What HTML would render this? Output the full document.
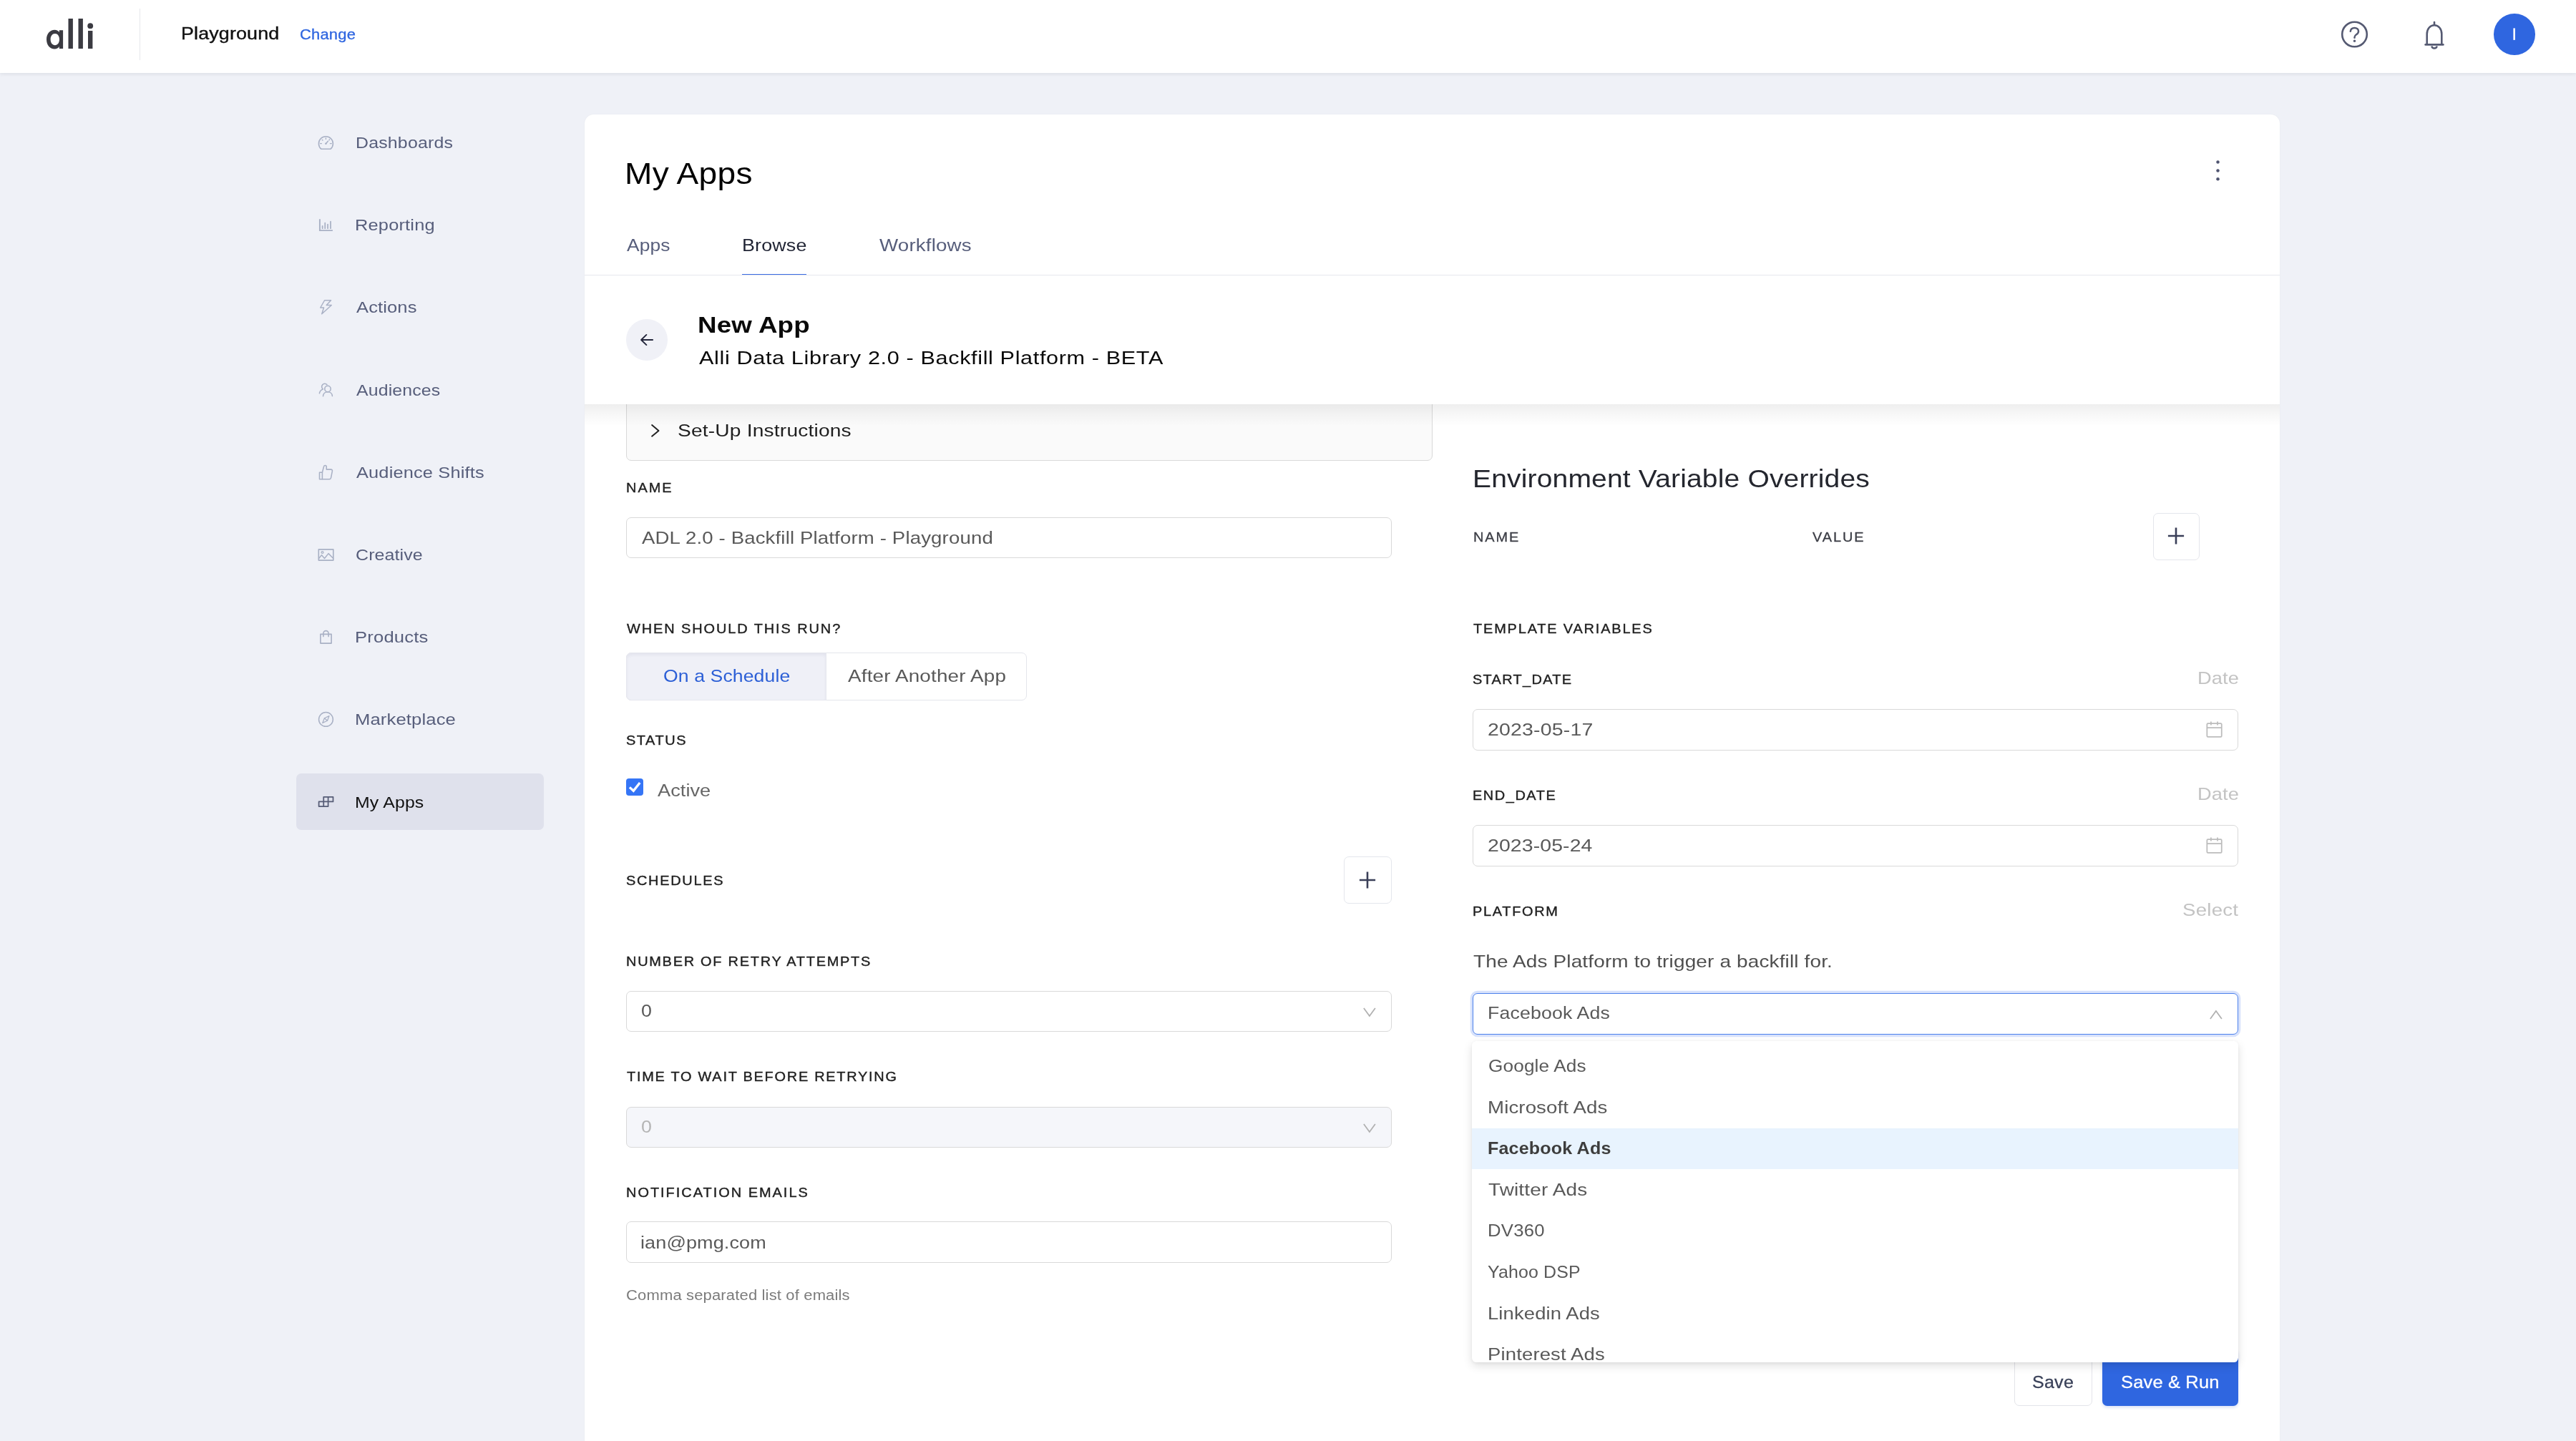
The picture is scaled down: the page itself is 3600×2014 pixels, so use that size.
<!DOCTYPE html>
<html lang="en"><head><meta charset="utf-8"><title>Alli - My Apps</title>
<style>
html,body{margin:0;padding:0;}
body{width:3600px;height:2014px;overflow:hidden;position:relative;background:#eff1f7;font-family:"Liberation Sans", sans-serif;}
#root{position:absolute;left:0;top:0;width:3600px;height:2014px;overflow:hidden;will-change:opacity;transform:translateZ(0);}
.b{position:absolute;display:block;}
.t{position:absolute;white-space:pre;font-family:"Liberation Sans", sans-serif;transform-origin:0 0;}
</style></head>
<body>
<div id="root">
<div class="b" style="left:0px;top:0px;width:3600px;height:102px;background:#fff;box-shadow:0 1.600px 4.500px rgba(20,22,35,0.075);"></div>
<svg class="b" style="left:60px;top:20px" width="80" height="56" viewBox="0 0 80 56" fill="none"><g fill="#3b3b42"><path fill-rule="evenodd" d="M16.4 21.7c3 0 5.2 1.3 6.4 3.2v-2.7h5.3V48h-5.3v-2.9c-1.2 2-3.5 3.4-6.5 3.4C9.7 48.5 5 43 5 35.1c0-7.900 4.700-13.4 11.400-13.400zM16.9 27c-3.700 0-6.300 3.200-6.300 8.100s2.600 8.100 6.300 8.100c3.600 0 6.100-3.200 6.100-8.100S20.500 27 16.900 27z"/><rect x="35.5" y="6" width="6.4" height="42"/><rect x="49.500" y="6" width="6.4" height="42"/><rect x="63" y="23" width="6.4" height="25"/><circle cx="66.2" cy="16.2" r="3.900"/></g></svg>
<div class="b" style="left:195px;top:12px;width:1px;height:72px;background:#e6e7ec;"></div>
<div class="t" style="left:253.02px;top:33px;line-height:27px;font-size:24.4px;color:#111;letter-spacing:0.13px;-webkit-text-stroke:0.4px #111;transform:scaleX(1.101);">Playground</div>
<div class="t" style="left:419.0px;top:36px;line-height:23px;font-size:20.6px;color:#2f66e0;letter-spacing:0.17px;-webkit-text-stroke:0.3px #2f66e0;transform:scaleX(1.067);">Change</div>
<svg class="b" style="left:3270px;top:28px" width="40" height="40" viewBox="0 0 40 40" fill="none"><circle cx="20.500" cy="20" r="17.300" stroke="#555a72" stroke-width="2.600"/><path d="M14.800 15.800c.300-3 2.600-4.900 5.700-4.900 3.200 0 5.500 2 5.500 4.800 0 2.300-1.300 3.500-3 4.600-1.700 1.100-2.500 2-2.500 3.800v.7" stroke="#555a72" stroke-width="2.500" stroke-linecap="round" fill="none"/><circle cx="20.500" cy="29.300" r="1.700" fill="#555a72"/></svg>
<svg class="b" style="left:3384px;top:28px" width="36" height="44" viewBox="0 0 36 44" fill="none"><path d="M18 3v3.500" stroke="#555a72" stroke-width="2.600" stroke-linecap="round"/><path d="M7.700 34.300V19.500C7.700 12.500 12 7.300 18 7.300s10.300 5.200 10.300 12.200v14.800" stroke="#555a72" stroke-width="2.600" fill="none"/><path d="M5.700 34.400h24.600" stroke="#555a72" stroke-width="2.800" stroke-linecap="round"/><path d="M14.300 36.500c.400 1.900 1.800 3.100 3.700 3.100s3.300-1.200 3.700-3.100" stroke="#555a72" stroke-width="2.500" fill="none"/></svg>
<div class="b" style="left:3485px;top:19px;width:57.5px;height:57.5px;background:#2f66e0;border-radius:50%;"></div>
<svg class="b" style="left:3505px;top:36px" width="18" height="24" viewBox="0 0 18 24" fill="none"><rect x="7.400" y="3.400" width="2.500" height="16.500" fill="#fff"/></svg>
<div class="b" style="left:414px;top:1081px;width:346px;height:79px;background:#dfe1ec;border-radius:7px;"></div>
<div class="t" style="left:497.0px;top:186px;line-height:26px;font-size:22.9px;color:#575e7b;letter-spacing:0.18px;transform:scaleX(1.087);">Dashboards</div>
<div class="t" style="left:496.0px;top:301px;line-height:26px;font-size:22.9px;color:#575e7b;letter-spacing:0.18px;transform:scaleX(1.108);">Reporting</div>
<div class="t" style="left:497.5px;top:416px;line-height:26px;font-size:22.9px;color:#575e7b;letter-spacing:0.11px;transform:scaleX(1.115);">Actions</div>
<div class="t" style="left:497.5px;top:532px;line-height:26px;font-size:22.9px;color:#575e7b;letter-spacing:0.14px;transform:scaleX(1.085);">Audiences</div>
<div class="t" style="left:497.5px;top:647px;line-height:26px;font-size:22.9px;color:#575e7b;letter-spacing:0.15px;transform:scaleX(1.108);">Audience Shifts</div>
<div class="t" style="left:496.5px;top:762px;line-height:26px;font-size:22.9px;color:#575e7b;letter-spacing:0.1px;transform:scaleX(1.091);">Creative</div>
<div class="t" style="left:496.0px;top:877px;line-height:26px;font-size:22.9px;color:#575e7b;letter-spacing:0.19px;transform:scaleX(1.117);">Products</div>
<div class="t" style="left:496.0px;top:992px;line-height:26px;font-size:22.9px;color:#575e7b;letter-spacing:0.11px;transform:scaleX(1.12);">Marketplace</div>
<div class="t" style="left:496.0px;top:1108px;line-height:26px;font-size:22.9px;color:#111;letter-spacing:0.16px;transform:scaleX(1.085);">My Apps</div>
<svg class="b" style="left:444px;top:189px" width="24" height="22" viewBox="0 0 24 22" fill="none"><path d="M4.700 19.200A10 10 0 1 1 18.100 19.200Z" stroke="#a9b1c5" stroke-width="1.55" fill="none" stroke-linecap="round" stroke-linejoin="round"/><path d="M11.400 3.900v1.500M3.500 11.600h1.900M17.400 11.600h1.900M6.300 6.400l.700.700M16 6.700l.600-.700" stroke="#a9b1c5" stroke-width="1.4" fill="none" stroke-linecap="round" stroke-linejoin="round"/><path d="M11.500 11.700 14.400 8.300" stroke="#a9b1c5" stroke-width="1.5" fill="none" stroke-linecap="round" stroke-linejoin="round"/><circle cx="11.400" cy="11.800" r="1.250" fill="#a9b1c5"/></svg>
<svg class="b" style="left:444px;top:304px" width="24" height="22" viewBox="0 0 24 22" fill="none"><path d="M2.900 2.200V18.100H20.900" stroke="#a9b1c5" stroke-width="1.900" fill="none" stroke-linejoin="miter"/><path d="M6.650 11.800v3.400M10.250 7.600v7.600M14.050 9.500v5.700M18 5.600v9.600" stroke="#a9b1c5" stroke-width="1.750" stroke-linecap="round"/></svg>
<svg class="b" style="left:444px;top:417px" width="24" height="24" viewBox="0 0 24 24" fill="none"><path d="M9.600 2.750H18.500L12.250 9.500H19.250L5.750 21.750L8.500 13H3.750Z" stroke="#a9b1c5" stroke-width="1.5" fill="none" stroke-linecap="round" stroke-linejoin="round" /></svg>
<svg class="b" style="left:444px;top:533px" width="24" height="24" viewBox="0 0 24 24" fill="none"><circle cx="14" cy="10.500" r="4.200" stroke="#a9b1c5" stroke-width="1.55" fill="none" stroke-linecap="round" stroke-linejoin="round"/><path d="M7.500 20.700C7.700 17.200 10.500 14.800 14 14.800S20.300 17.200 20.400 20.600" stroke="#a9b1c5" stroke-width="1.55" fill="none" stroke-linecap="round" stroke-linejoin="round"/><path d="M12.900 4.600A4.200 4.200 0 1 0 7.400 10.900C4.600 12 2.900 14 2.400 16.750" stroke="#a9b1c5" stroke-width="1.55" fill="none" stroke-linecap="round" stroke-linejoin="round"/></svg>
<svg class="b" style="left:444px;top:648px" width="24" height="24" viewBox="0 0 24 24" fill="none"><path d="M2.500 12.250H6.400V21.750H2.500Z" stroke="#a9b1c5" stroke-width="1.55" fill="none" stroke-linecap="round" stroke-linejoin="round"/><path d="M6.400 12.250L8.500 4.200C8.800 2.900 9.600 2.500 10.400 2.500C11.600 2.500 12.250 3.300 12.250 4.400V8.100H18.600C19.900 8.100 20.600 9.100 20.400 10.300L18.600 19.600C18.300 21 17.400 21.750 16.300 21.750H6.400" stroke="#a9b1c5" stroke-width="1.55" fill="none" stroke-linecap="round" stroke-linejoin="round"/></svg>
<svg class="b" style="left:443px;top:765px" width="26" height="22" viewBox="0 0 26 22" fill="none"><rect x="2.300" y="2.900" width="20.500" height="15.200" stroke="#a9b1c5" stroke-width="1.65" fill="none" stroke-linecap="round" stroke-linejoin="round" stroke-linejoin="miter"/><circle cx="7.500" cy="7" r="1.450" stroke="#a9b1c5" stroke-width="1.3" fill="none" stroke-linecap="round" stroke-linejoin="round"/><path d="M2.600 15.400 6.500 10.750 10.500 15.500 16 8.600 22.600 15.200" stroke="#a9b1c5" stroke-width="1.5" fill="none" stroke-linecap="round" stroke-linejoin="round"/></svg>
<svg class="b" style="left:444px;top:878px" width="24" height="24" viewBox="0 0 24 24" fill="none"><rect x="3.900" y="8.400" width="15.200" height="12.700" stroke="#a9b1c5" stroke-width="1.65" fill="none" stroke-linecap="round" stroke-linejoin="round" stroke-linejoin="miter"/><path d="M7.900 11.600V7.200A3.600 3.600 0 0 1 15.100 7.200V11.600" stroke="#a9b1c5" stroke-width="1.6" fill="none" stroke-linecap="round" stroke-linejoin="round"/></svg>
<svg class="b" style="left:444px;top:994px" width="24" height="24" viewBox="0 0 24 24" fill="none"><circle cx="11.450" cy="11.450" r="9.900" stroke="#a9b1c5" stroke-width="1.5" fill="none" stroke-linecap="round" stroke-linejoin="round"/><path d="M16 6.600 13.500 13.250 6.750 16.400 9.400 9.750ZM9.400 9.750 13.500 13.250" stroke="#a9b1c5" stroke-width="1.3" fill="none" stroke-linecap="round" stroke-linejoin="round"/></svg>
<svg class="b" style="left:444px;top:1111px" width="24" height="20" viewBox="0 0 24 20" fill="none"><path d="M8.250 2.750H21.500V9.400H8.250ZM14.600 2.750V16M1.600 9.400H14.600V16H1.600ZM8.250 9.400V16" stroke="#565c76" stroke-width="1.750" fill="none" stroke-linejoin="round"/></svg>
<div class="b" style="left:817px;top:160px;width:2369px;height:1900px;background:#fff;border-radius:12.800px 12.800px 0 0;box-shadow:0 0 2px rgba(30,35,60,0.05);"></div>
<div class="t" style="left:873.23px;top:219px;line-height:47px;font-size:41.8px;color:#000;letter-spacing:0.26px;transform:scaleX(1.103);">My Apps</div>
<svg class="b" style="left:3090px;top:220px" width="20" height="40" viewBox="0 0 20 40" fill="none"><circle cx="9.500" cy="6.6" r="2.250" fill="#4f5470"/><circle cx="9.500" cy="18.4" r="2.250" fill="#4f5470"/><circle cx="9.500" cy="30.3" r="2.250" fill="#4f5470"/></svg>
<div class="t" style="left:875.5px;top:329px;line-height:27px;font-size:24.6px;color:#575e7b;letter-spacing:0.11px;transform:scaleX(1.072);">Apps</div>
<div class="t" style="left:1036.75px;top:329px;line-height:27px;font-size:24.6px;color:#1f2333;letter-spacing:0.15px;transform:scaleX(1.092);">Browse</div>
<div class="t" style="left:1228.75px;top:329px;line-height:27px;font-size:24.6px;color:#575e7b;letter-spacing:0.14px;transform:scaleX(1.127);">Workflows</div>
<div class="b" style="left:817px;top:384px;width:2369px;height:1px;background:#e6e8ee;"></div>
<div class="b" style="left:1037px;top:383px;width:90px;height:1px;background:#3a6ce2;"></div>
<div class="b" style="left:875px;top:540px;width:1127px;height:104px;background:#fafafa;border:1px solid #d9d9d9;box-sizing:border-box;border-radius:7px;"></div>
<svg class="b" style="left:906px;top:590px" width="20" height="24" viewBox="0 0 20 24" fill="none"><path d="M5.100 4.100 14.500 11.900 5.100 19.700" stroke="#222" stroke-width="2" fill="none" stroke-linecap="round" stroke-linejoin="round"/></svg>
<div class="t" style="left:947.42px;top:588px;line-height:27px;font-size:24.4px;color:#1f1f1f;letter-spacing:0.16px;transform:scaleX(1.154);">Set-Up Instructions</div>
<div class="t" style="left:875.3px;top:671px;line-height:21px;font-size:19.2px;color:#1f1f1f;letter-spacing:1.92px;-webkit-text-stroke:0.4px #1f1f1f;transform:scaleX(1.04);">NAME</div>
<div class="b" style="left:875px;top:723px;width:1070px;height:57px;background:#fff;border:1px solid #d9d9d9;box-sizing:border-box;border-radius:7px;"></div>
<div class="t" style="left:896.6px;top:738px;line-height:27px;font-size:24.4px;color:#595959;letter-spacing:0.13px;transform:scaleX(1.131);">ADL 2.0 - Backfill Platform - Playground</div>
<div class="t" style="left:875.84px;top:868px;line-height:21px;font-size:19.2px;color:#1f1f1f;letter-spacing:1.83px;-webkit-text-stroke:0.4px #1f1f1f;transform:scaleX(1.04);">WHEN SHOULD THIS RUN?</div>
<div class="b" style="left:875px;top:912px;width:560px;height:66.5px;background:#fff;border:1px solid #e4e6ec;box-sizing:border-box;border-radius:7px;"></div>
<div class="b" style="left:875px;top:912px;width:280px;height:66.5px;background:#eff0f7;border:1px solid #e6e7ee;box-sizing:border-box;border-radius:7px 0 0 7px;box-shadow:inset 0 3px 5px -1px rgba(40,45,90,0.07);"></div>
<div class="t" style="left:926.5px;top:931px;line-height:27px;font-size:24.4px;color:#2c5fd6;letter-spacing:0.1px;transform:scaleX(1.09);">On a Schedule</div>
<div class="t" style="left:1184.7px;top:931px;line-height:27px;font-size:24.4px;color:#595959;letter-spacing:0.14px;transform:scaleX(1.142);">After Another App</div>
<div class="t" style="left:874.65px;top:1024px;line-height:21px;font-size:19.2px;color:#1f1f1f;letter-spacing:1.48px;-webkit-text-stroke:0.4px #1f1f1f;transform:scaleX(1.04);">STATUS</div>
<div class="b" style="left:875px;top:1088px;width:23.5px;height:23.5px;background:#3575f6;border-radius:4px;"></div>
<svg class="b" style="left:875px;top:1088px" width="23.5" height="23.5" viewBox="0 0 23.5 23.5" fill="none"><path d="M4.900 12.400 10.300 17.300 19.200 5.900" stroke="#fff" stroke-width="3.300" fill="none" stroke-linecap="butt" stroke-linejoin="miter"/></svg>
<div class="t" style="left:919.1px;top:1091px;line-height:27px;font-size:24.4px;color:#666;letter-spacing:0.05px;transform:scaleX(1.113);">Active</div>
<div class="t" style="left:874.65px;top:1220px;line-height:21px;font-size:19.2px;color:#1f1f1f;letter-spacing:1.63px;-webkit-text-stroke:0.4px #1f1f1f;transform:scaleX(1.04);">SCHEDULES</div>
<div class="b" style="left:1878px;top:1197px;width:67px;height:65.5px;background:#fff;border:1px solid #e4e6ec;box-sizing:border-box;border-radius:7px;"></div>
<svg class="b" style="left:1899.4px;top:1217.7px" width="24" height="24" viewBox="0 0 24 24" fill="none"><path d="M12 0.500v23M0.900 12h22.200" stroke="#3a3f58" stroke-width="2.600" stroke-linecap="butt"/></svg>
<div class="t" style="left:874.8px;top:1333px;line-height:21px;font-size:19.2px;color:#1f1f1f;letter-spacing:1.66px;-webkit-text-stroke:0.4px #1f1f1f;transform:scaleX(1.04);">NUMBER OF RETRY ATTEMPTS</div>
<div class="b" style="left:875px;top:1385px;width:1070px;height:56.5px;background:#fff;border:1px solid #d9d9d9;box-sizing:border-box;border-radius:7px;"></div>
<div class="t" style="left:895.6px;top:1399px;line-height:27px;font-size:24.4px;color:#595959;transform:scaleX(1.1);">0</div>
<svg class="b" style="left:1903.5px;top:1408px" width="20" height="14" viewBox="0 0 20 14" fill="none"><path d="M1.900 1.100 9.900 12 17.900 1.100" stroke="#b0b0b0" stroke-width="1.750" fill="none" stroke-linecap="butt" stroke-linejoin="miter"/></svg>
<div class="t" style="left:875.5px;top:1494px;line-height:21px;font-size:19.2px;color:#1f1f1f;letter-spacing:1.66px;-webkit-text-stroke:0.4px #1f1f1f;transform:scaleX(1.04);">TIME TO WAIT BEFORE RETRYING</div>
<div class="b" style="left:875px;top:1547px;width:1070px;height:56.5px;background:#f5f6fa;border:1px solid #d9d9d9;box-sizing:border-box;border-radius:7px;"></div>
<div class="t" style="left:895.6px;top:1561px;line-height:27px;font-size:24.4px;color:#b5b5b5;transform:scaleX(1.1);">0</div>
<svg class="b" style="left:1903.5px;top:1570px" width="20" height="14" viewBox="0 0 20 14" fill="none"><path d="M1.900 1.100 9.900 12 17.900 1.100" stroke="#b0b0b0" stroke-width="1.750" fill="none" stroke-linecap="butt" stroke-linejoin="miter"/></svg>
<div class="t" style="left:874.8px;top:1656px;line-height:21px;font-size:19.2px;color:#1f1f1f;letter-spacing:1.91px;-webkit-text-stroke:0.4px #1f1f1f;transform:scaleX(1.04);">NOTIFICATION EMAILS</div>
<div class="b" style="left:875px;top:1707px;width:1070px;height:57.5px;background:#fff;border:1px solid #d9d9d9;box-sizing:border-box;border-radius:7px;"></div>
<div class="t" style="left:894.8px;top:1723px;line-height:27px;font-size:24.4px;color:#595959;letter-spacing:0.11px;transform:scaleX(1.107);">ian@pmg.com</div>
<div class="t" style="left:874.8px;top:1799px;line-height:22px;font-size:20px;color:#7b7b7b;letter-spacing:0.14px;transform:scaleX(1.1);">Comma separated list of emails</div>
<div class="t" style="left:2058.2px;top:649px;line-height:39px;font-size:35.2px;color:#24262e;letter-spacing:0.13px;transform:scaleX(1.11);">Environment Variable Overrides</div>
<div class="t" style="left:2058.5px;top:740px;line-height:21px;font-size:19.2px;color:#3b3d45;letter-spacing:1.79px;-webkit-text-stroke:0.3px #3b3d45;transform:scaleX(1.04);">NAME</div>
<div class="t" style="left:2533.42px;top:740px;line-height:21px;font-size:19.2px;color:#3b3d45;letter-spacing:1.81px;-webkit-text-stroke:0.3px #3b3d45;transform:scaleX(1.04);">VALUE</div>
<div class="b" style="left:3008.5px;top:717px;width:65.5px;height:65.5px;background:#fff;border:1px solid #e4e6ec;box-sizing:border-box;border-radius:7px;"></div>
<svg class="b" style="left:3029px;top:737.4px" width="24" height="24" viewBox="0 0 24 24" fill="none"><path d="M12 0.500v23M0.900 12h22.200" stroke="#3a3f58" stroke-width="2.600" stroke-linecap="butt"/></svg>
<div class="t" style="left:2058.7px;top:868px;line-height:21px;font-size:19.2px;color:#1f1f1f;letter-spacing:1.75px;-webkit-text-stroke:0.4px #1f1f1f;transform:scaleX(1.04);">TEMPLATE VARIABLES</div>
<div class="t" style="left:2057.85px;top:939px;line-height:21px;font-size:19.2px;color:#1f1f1f;letter-spacing:1.25px;-webkit-text-stroke:0.4px #1f1f1f;transform:scaleX(1.04);">START_DATE</div>
<div class="t" style="left:3070.99px;top:934px;line-height:27px;font-size:24.4px;color:#c3c3c3;letter-spacing:0.11px;transform:scaleX(1.116);">Date</div>
<div class="b" style="left:2058px;top:991px;width:1070px;height:57.5px;background:#fff;border:1px solid #d9d9d9;box-sizing:border-box;border-radius:7px;"></div>
<div class="t" style="left:2079.3px;top:1006px;line-height:27px;font-size:24.4px;color:#595959;letter-spacing:0.17px;transform:scaleX(1.167);">2023-05-17</div>
<svg class="b" style="left:3083px;top:1008px" width="23" height="23" viewBox="0 0 23 23" fill="none"><rect x="1.350" y="3.150" width="20.400" height="18.700" rx="1.300" stroke="#bcbcbc" stroke-width="1.750"/><path d="M1.350 9.100h20.400M6.900 0.400v5.200M16 0.400v5.200" stroke="#bcbcbc" stroke-width="1.750" stroke-linecap="butt"/></svg>
<div class="t" style="left:2058.2px;top:1101px;line-height:21px;font-size:19.2px;color:#1f1f1f;letter-spacing:1.48px;-webkit-text-stroke:0.4px #1f1f1f;transform:scaleX(1.04);">END_DATE</div>
<div class="t" style="left:3070.99px;top:1096px;line-height:27px;font-size:24.4px;color:#c3c3c3;letter-spacing:0.11px;transform:scaleX(1.116);">Date</div>
<div class="b" style="left:2058px;top:1153px;width:1070px;height:57.5px;background:#fff;border:1px solid #d9d9d9;box-sizing:border-box;border-radius:7px;"></div>
<div class="t" style="left:2079.3px;top:1168px;line-height:27px;font-size:24.4px;color:#595959;letter-spacing:0.09px;transform:scaleX(1.166);">2023-05-24</div>
<svg class="b" style="left:3083px;top:1170px" width="23" height="23" viewBox="0 0 23 23" fill="none"><rect x="1.350" y="3.150" width="20.400" height="18.700" rx="1.300" stroke="#bcbcbc" stroke-width="1.750"/><path d="M1.350 9.100h20.400M6.900 0.400v5.200M16 0.400v5.200" stroke="#bcbcbc" stroke-width="1.750" stroke-linecap="butt"/></svg>
<div class="t" style="left:2058.2px;top:1263px;line-height:21px;font-size:19.2px;color:#1f1f1f;letter-spacing:1.62px;-webkit-text-stroke:0.4px #1f1f1f;transform:scaleX(1.04);">PLATFORM</div>
<div class="t" style="left:3050.14px;top:1258px;line-height:27px;font-size:24.4px;color:#c3c3c3;letter-spacing:0.23px;transform:scaleX(1.132);">Select</div>
<div class="t" style="left:2058.57px;top:1330px;line-height:27px;font-size:24.4px;color:#4f4f4f;letter-spacing:0.13px;transform:scaleX(1.146);">The Ads Platform to trigger a backfill for.</div>
<div class="b" style="left:2058px;top:1388px;width:1070px;height:58px;background:#fff;border:1.500px solid #4a80ec;box-sizing:border-box;border-radius:7px;box-shadow:0 0 0 3.300px rgba(60,110,235,0.2);"></div>
<div class="t" style="left:2078.6px;top:1402px;line-height:27px;font-size:24.4px;color:#595959;letter-spacing:0.15px;transform:scaleX(1.094);">Facebook Ads</div>
<svg class="b" style="left:3086.5px;top:1410.5px" width="20" height="14" viewBox="0 0 20 14" fill="none"><path d="M1.900 13 9.900 2.100 17.900 13" stroke="#b0b0b0" stroke-width="1.750" fill="none" stroke-linecap="butt" stroke-linejoin="miter"/></svg>
<div class="b" style="left:2814.5px;top:1885px;width:109.2px;height:79.5px;background:#fff;border:1px solid #e3e4e9;box-sizing:border-box;border-radius:7px;"></div>
<div class="t" style="left:2839.8px;top:1918px;line-height:27px;font-size:24.4px;color:#394058;letter-spacing:0.26px;-webkit-text-stroke:0.3px #394058;transform:scaleX(1.025);">Save</div>
<div class="b" style="left:2938px;top:1885px;width:190px;height:80px;background:#2f66e0;border-radius:7px;box-shadow:0 2px 4px rgba(40,80,200,0.18);"></div>
<div class="t" style="left:2964.2px;top:1918px;line-height:27px;font-size:24.4px;color:#fff;letter-spacing:0.14px;-webkit-text-stroke:0.3px #fff;transform:scaleX(1.046);">Save &amp; Run</div>
<div class="b" style="left:2057px;top:1454.5px;width:1071px;height:449.5px;background:#fff;border-radius:6.4px;box-shadow:0 5px 13px rgba(0,0,0,0.12), 0 1px 4px rgba(0,0,0,0.05);overflow:hidden;"></div>
<div class="b" style="left:2057px;top:1576.5px;width:1071px;height:57px;background:#e8f3fe;"></div>
<div class="t" style="left:2079.6px;top:1476px;line-height:27px;font-size:24.4px;color:#595959;letter-spacing:0.13px;transform:scaleX(1.073);">Google Ads</div>
<div class="t" style="left:2079.1px;top:1534px;line-height:27px;font-size:24.4px;color:#595959;letter-spacing:0.1px;transform:scaleX(1.133);">Microsoft Ads</div>
<div class="t" style="left:2078.93px;top:1591px;line-height:27px;font-size:24.4px;color:#3d3d3d;letter-spacing:0.18px;font-weight:700;transform:scaleX(1.027);">Facebook Ads</div>
<div class="t" style="left:2079.57px;top:1649px;line-height:27px;font-size:24.4px;color:#595959;letter-spacing:0.14px;transform:scaleX(1.145);">Twitter Ads</div>
<div class="t" style="left:2079.0px;top:1706px;line-height:27px;font-size:24.4px;color:#595959;letter-spacing:0.22px;transform:scaleX(1.053);">DV360</div>
<div class="t" style="left:2079.34px;top:1764px;line-height:27px;font-size:24.4px;color:#595959;letter-spacing:0.15px;transform:scaleX(1.021);">Yahoo DSP</div>
<div class="t" style="left:2079.0px;top:1822px;line-height:27px;font-size:24.4px;color:#595959;letter-spacing:0.12px;transform:scaleX(1.123);">Linkedin Ads</div>
<div class="b" style="left:2057px;top:1860px;width:1071px;height:44px;overflow:hidden;border-radius:0 0 6.400px 6.400px">
<div class="t" style="left:22.0px;top:19px;line-height:27px;font-size:24.4px;color:#595959;letter-spacing:0.13px;transform:scaleX(1.127);">Pinterest Ads</div>
</div>
<div class="b" style="left:817px;top:385px;width:2369px;height:180px;background:#fff;"></div>
<div class="b" style="left:817px;top:565px;width:2369px;height:30px;background:linear-gradient(to bottom, rgba(0,0,0,0.068), rgba(0,0,0,0.03) 45%, rgba(0,0,0,0));"></div>
<div class="b" style="left:875px;top:446.25px;width:57.5px;height:57.5px;background:#f0f1f7;border-radius:50%;"></div>
<svg class="b" style="left:893px;top:464px" width="22" height="22" viewBox="0 0 22 22" fill="none"><path d="M19.100 11H3.400M10.400 3.900 3.100 11l7.300 7.100" stroke="#23263b" stroke-width="1.900" fill="none" stroke-linecap="round" stroke-linejoin="round"/></svg>
<div class="t" style="left:975.0px;top:436px;line-height:36px;font-size:32px;color:#0a0a0a;letter-spacing:0.12px;font-weight:700;transform:scaleX(1.148);">New App</div>
<div class="t" style="left:977.0px;top:485px;line-height:30px;font-size:26.2px;color:#0a0a0a;letter-spacing:0.53px;transform:scaleX(1.17);">Alli Data Library 2.0 - Backfill Platform - BETA</div>
</div>
</body></html>
